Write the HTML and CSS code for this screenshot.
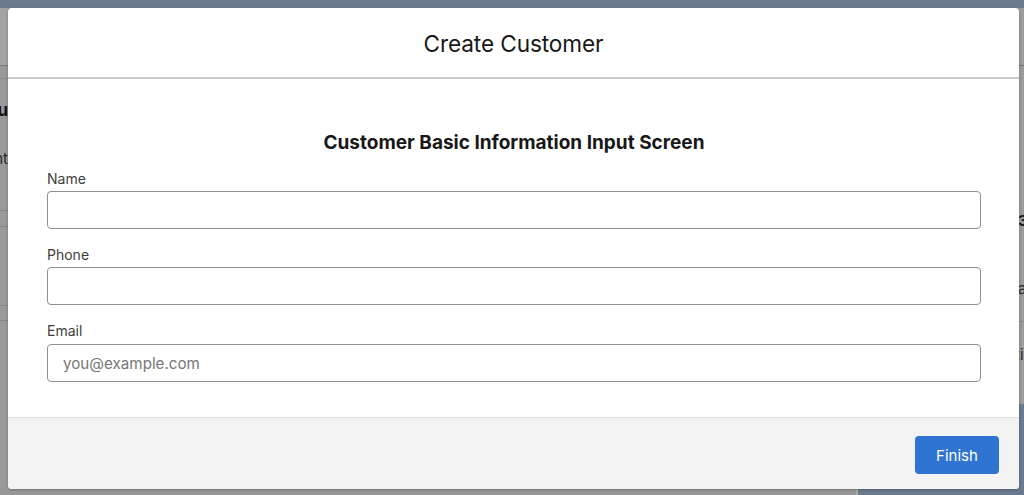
FILE: index.html
```html
<!DOCTYPE html>
<html lang="en">
<head>
<meta charset="utf-8">
<title>Create Customer</title>
<link rel="stylesheet" href="styles.css">
</head>
<body>
<div class="backdrop">
  <div class="bd-top"></div>
  <div class="bd-left">
    <div class="bd-left-head"></div>
    <div class="bd-left-sub"></div>
    <div class="bd-word bd-bold">Accou</div>
    <div class="bd-word bd-reg">Conte nt</div>
    <div class="bd-rule r1"></div>
    <div class="bd-rule r2"></div>
    <div class="bd-rule r3"></div>
    <div class="bd-rule r4"></div>
  </div>
  <div class="bd-mid"></div>
  <div class="bd-right">
    <div class="bd-right-head"></div>
    <div class="bd-rword w1">3</div>
    <div class="bd-rword w2">a</div>
    <div class="bd-rrule"></div>
    <div class="bd-rword w3">ti</div>
    <div class="bd-right-foot"></div>
  </div>
  <div class="bd-bottom">
    <div class="bd-bottom-grey"></div>
    <div class="bd-bottom-slate"></div>
  </div>
</div>

<div class="modal" role="dialog" aria-labelledby="modal-title">
  <header class="modal-header">
    <h2 id="modal-title" class="modal-title">Create Customer</h2>
  </header>
  <div class="modal-body">
    <h3 class="screen-title">Customer Basic Information Input Screen</h3>
    <div class="fields">
      <div class="field">
        <label class="field-label" for="f-name">Name</label>
        <input class="field-input" id="f-name" type="text">
      </div>
      <div class="field">
        <label class="field-label" for="f-phone">Phone</label>
        <input class="field-input" id="f-phone" type="tel">
      </div>
      <div class="field">
        <label class="field-label" for="f-email">Email</label>
        <input class="field-input" id="f-email" type="email" placeholder="you@example.com">
      </div>
    </div>
  </div>
  <footer class="modal-footer">
    <button class="btn-finish" type="button">Finish</button>
  </footer>
</div>
</body>
</html>
```
FILE: styles.css
```css
* { box-sizing: border-box; }

html, body {
  margin: 0;
  padding: 0;
  width: 1024px;
  height: 495px;
  overflow: hidden;
  font-family: Inter, "Liberation Sans", Arial, sans-serif;
}

body {
  position: relative;
  background: #9d9d9d;
}

/* ---------- dimmed page behind the modal ---------- */
.backdrop {
  display: grid;
  grid-template-columns: 8px 1fr 5px;
  grid-template-rows: 8px 1fr 6px;
  width: 1024px;
  height: 495px;
}

.bd-top {
  grid-column: 1 / 4;
  background: #6c7a90;
}

.bd-left {
  display: flex;
  flex-direction: column;
  overflow: hidden;
  background: #9a9a9a;
}

.bd-left-head {
  height: 58px;
  background: #a3a3a3;
  border-bottom: 1px solid #7c7c7c;
  flex-shrink: 0;
}

.bd-left-sub {
  height: 13px;
  border-bottom: 1px solid #8a8a8a;
  flex-shrink: 0;
}

.bd-word {
  flex-shrink: 0;
  white-space: nowrap;
  direction: rtl;
  text-align: left;
  width: 8px;
  overflow: visible;
}

.bd-bold {
  margin-top: 21px;
  font-weight: 700;
  font-size: 17px;
  line-height: 20px;
  color: #141414;
}

.bd-reg {
  margin-top: 30px;
  font-size: 15px;
  line-height: 18px;
  color: #2c2c2c;
}

.bd-rule {
  height: 1px;
  background: #868686;
  flex-shrink: 0;
}

.r1 { margin-top: 42px; }
.r2 { margin-top: 15px; }
.r3 { margin-top: 78px; }
.r4 { margin-top: 14px; }

.bd-mid { background: #9d9d9d; }

.bd-right {
  display: flex;
  flex-direction: column;
  overflow: hidden;
  background: #9b9b9b;
}

.bd-right-head {
  height: 58px;
  border-bottom: 1px solid #777;
  flex-shrink: 0;
}

.bd-rword {
  flex-shrink: 0;
  font-size: 15px;
  line-height: 18px;
  color: #2c2c2c;
  margin-left: -1px;
}

.w1 { margin-top: 146px; font-weight: 700; color: #1a1a1a; }
.w2 { margin-top: 50px; }
.bd-rrule { height: 1px; background: #888; margin-top: 23px; flex-shrink: 0; }
.w3 { margin-top: 24px; margin-left: -4px; }

.bd-right-foot {
  flex: 1;
  margin-top: 40px;
  background: #6c7a90;
}

.bd-bottom {
  grid-column: 1 / 4;
  display: flex;
}

.bd-bottom-grey { width: 858px; background: #979797; border-right: 2px solid #a9a9a9; }
.bd-bottom-slate { flex: 1; background: #6c7a90; }

/* ---------- modal (overlay) ---------- */
.modal {
  position: absolute;
  top: 8px;
  left: 8px;
  width: 1011px;
  height: 481px;
  display: flex;
  flex-direction: column;
  background: #fff;
  border-radius: 4px;
  box-shadow: 0 1px 3px rgba(0, 0, 0, 0.25);
  overflow: hidden;
}

.modal-header {
  height: 71px;
  flex-shrink: 0;
  display: flex;
  align-items: center;
  justify-content: center;
  border-bottom: 2px solid #cacaca;
}

.modal-title {
  margin: 3px 0 0;
  font-size: 22.6px;
  font-weight: 400;
  line-height: 28px;
  color: #181818;
  letter-spacing: -0.1px;
}

.modal-body {
  flex: 1;
  padding: 52px 38px 0 39px;
}

.screen-title {
  margin: 0;
  text-align: center;
  font-size: 19px;
  font-weight: 700;
  line-height: 24px;
  color: #181818;
}

.fields {
  margin-top: 15px;
  display: flex;
  flex-direction: column;
  gap: 17px;
}

.field {
  display: flex;
  flex-direction: column;
}

.field-label {
  font-size: 14px;
  line-height: 18px;
  color: #3e3e3c;
  margin-bottom: 3px;
}

.field + .field + .field .field-label {
  margin-bottom: 4px;
}

.field-input {
  height: 38px;
  width: 100%;
  border: 1px solid #8f8f8f;
  border-radius: 4px;
  padding: 0 15px;
  font-family: inherit;
  font-size: 15.2px;
  color: #181818;
  background: #fff;
  outline: none;
}

.field-input::placeholder {
  color: #777;
}

.modal-footer {
  height: 72px;
  flex-shrink: 0;
  display: flex;
  align-items: flex-start;
  justify-content: flex-end;
  padding: 18px 20px 0 0;
  background: #f3f3f3;
  border-top: 1px solid #e3e3e3;
}

.btn-finish {
  width: 84px;
  height: 38px;
  border: none;
  border-radius: 4px;
  background: #2f74d0;
  color: #fff;
  font-family: inherit;
  font-size: 15px;
  cursor: pointer;
}
```
